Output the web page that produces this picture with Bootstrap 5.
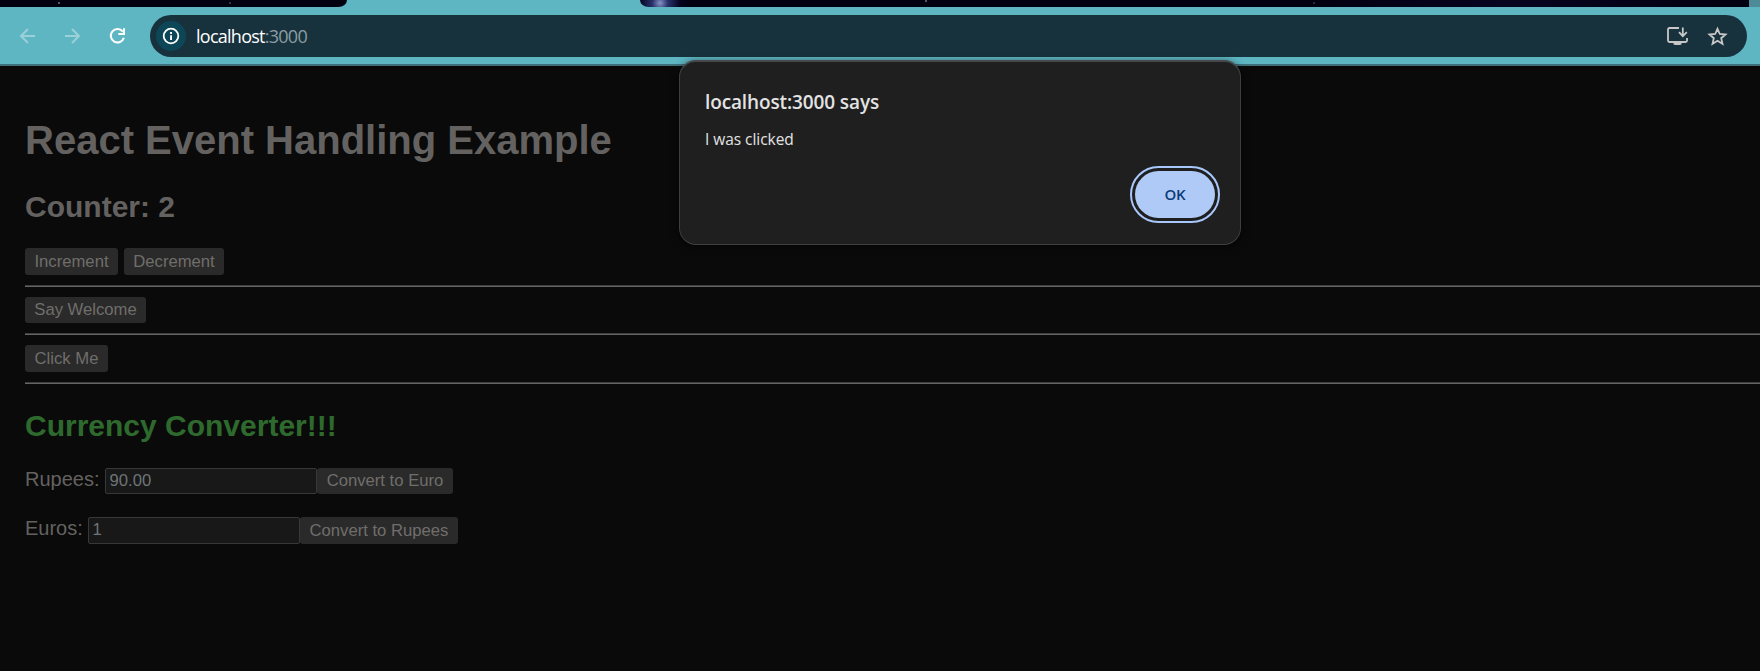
<!DOCTYPE html>
<html lang="en">
<head>
<meta charset="utf-8">
<title>React Event Handling Example</title>
<link href="https://cdn.jsdelivr.net/npm/bootstrap@5.3.0/dist/css/bootstrap.min.css" rel="stylesheet">
<style>
body{background:#0a0a0a;color:#646260;font:20px/23px "Liberation Sans",Arial,sans-serif;height:671px;overflow:hidden}
.tabstrip{height:7px;background:#5db6c2}
.tab-left{width:347px;background:#010110;border-bottom-right-radius:15px 12px}
.tab-right{width:1109px;margin-left:293px;border-bottom-left-radius:15px 12px;background:radial-gradient(circle at 20px 3px,#8794c4 0,#27306a 8px,#04041f 20px,transparent 30px),linear-gradient(90deg,#010110 0 60%,#070420 78%,#010110)}
.star{width:2px;height:2px;background:#55566c;margin-top:2px}
.toolbar{height:59px;background:#5db6c2;border-bottom:2px solid #3f7079;padding:8px 13px 7px 16px}
.omnibox{height:42px;border-radius:21px;background:#18323d;margin-left:21px;padding:0 18px 0 6px}
.info{width:30px;height:30px;background:#0d4657}
.url{font:18px/26px "Open Sans","Noto Sans",sans-serif;letter-spacing:-.74px;margin-left:10px;color:#fff}
.url span{color:#8c9da3}
.tool{width:24px;height:24px}
.example{padding:47px 0 0 25px}
h1{font-size:40px;line-height:46px;font-weight:700;margin:0 0 27px}
h2{font-size:30px;line-height:34px;font-weight:700;margin:0 0 24px}
.gray{background:#2a2a2a;color:#706e6b;border:0;border-radius:3px;font-size:16.67px;line-height:19px;height:27px;padding:0 0 1px;text-align:center;white-space:nowrap}
.rule{height:2px;border:0;opacity:1;margin:10px 0;background:linear-gradient(#3f3f3f 50%,#656565 50%)}
.green{color:#2e6a2d;margin:25px 0 25px}
.field{width:212px;height:26px;border:1px solid #383838;border-radius:2px;background:#181818;color:#6f7577;font-size:16.67px;line-height:19px;padding:0 3px 1px 3.5px;outline:0}
.alert-box{left:679px;top:60px;width:562px;height:185px;background:#1f1f1f;border:1px solid #3d3f42;border-top:2px solid #45494c;border-radius:17px;box-shadow:0 2px 8px #0009;font-family:"Open Sans","Noto Sans",sans-serif;padding:27px 25px 0 25px}
.alert-title{font-size:19px;line-height:26px;font-weight:600;color:#e3e3e3;letter-spacing:-.12px}
.alert-text{font-size:15.5px;line-height:20px;color:#e3e3e3;letter-spacing:-.05px;margin-top:14px}
.ok{width:80px;height:47px;border:0;border-radius:24px;background:#afcaf7;color:#0b3a78;font-size:15px;font-weight:600;letter-spacing:-.3px;outline:2px solid #a8c7fa;outline-offset:3px;margin-top:22px}
</style>
</head>
<body>
<div class="tabstrip d-flex">
  <div class="tab-left d-flex"><i class="star" style="margin-left:58px"></i><i class="star" style="margin-left:169px;opacity:.6"></i></div>
  <div class="tab-right d-flex"><i class="star" style="margin-left:285px;margin-top:0"></i><i class="star" style="margin-left:386px;opacity:.5"></i></div>
  <div class="flex-grow-1" style="background:#4d8b99"></div>
</div>
<nav class="toolbar d-flex align-items-center">
  <svg class="tool" viewBox="0 0 24 24" fill="none" stroke="#9bd0d8" stroke-width="2" style="margin-right:21px"><path d="M19 12H5.500M12 5l-7 7 7 7"/></svg>
  <svg class="tool" viewBox="0 0 24 24" fill="none" stroke="#9bd0d8" stroke-width="2" style="margin-right:20px"><path d="M4 12h14M11 5l7 7-7 7"/></svg>
  <svg class="tool" viewBox="0 0 24 24"><path fill="none" stroke="#fff" stroke-width="2.100" d="M17.800 7.600a6.700 6.700 0 1 0 1.100 6.100"/><path fill="#fff" d="M20 4.300v6.700h-6.700V9H18V4.300z"/></svg>
  <div class="omnibox flex-grow-1 d-flex align-items-center">
    <span class="info rounded-circle d-flex align-items-center justify-content-center"><svg width="18" height="18" viewBox="0 0 18 18"><circle cx="9" cy="9" r="7.300" fill="none" stroke="#fff" stroke-width="1.800"/><path fill="#fff" d="M8.100 5h1.900v1.900H8.100zM8.100 8.200h1.900V13H8.100z"/></svg></span>
    <div class="url me-auto">localhost<span>:3000</span></div>
    <svg width="24" height="24" viewBox="0 0 24 24" fill="none" stroke="#c7c7c7" stroke-width="1.800" style="margin-right:16px"><path d="M14 4H4.500Q3 4 3 5.500v11Q3 18 4.500 18h16q1.500 0 1.500-1.500V14"/><path d="M17.800 3.500v8M14 8.200l3.800 4 4-4"/><path fill="#c7c7c7" stroke="none" d="M8.500 18h8v2.500h-1V21h-6v-.5h-1z"/></svg>
    <svg width="24" height="24" viewBox="0 0 24 24" fill="none" stroke="#c7c7c7" stroke-width="1.800"><path d="M12.500 4.800l2.300 5.200 5.700.5-4.300 3.700 1.300 5.600-5-3-5 3 1.300-5.600-4.300-3.700 5.700-.5z"/></svg>
  </div>
</nav>
<main class="example">
  <h1 class="mt-1">React Event Handling Example</h1>
  <h2>Counter: 2</h2>
  <div class="d-flex"><button class="gray" style="width:93px;margin-right:6px">Increment</button><button class="gray" style="width:100px">Decrement</button></div>
  <hr class="rule">
  <div class="d-flex"><button class="gray" style="width:121px;height:26px">Say Welcome</button></div>
  <hr class="rule">
  <div class="d-flex"><button class="gray" style="width:83px">Click Me</button></div>
  <hr class="rule">
  <h2 class="green">Currency Converter!!!</h2>
  <div class="d-flex"><label style="width:80px">Rupees:</label><input class="field" value="90.00"><button class="gray" style="width:136px;height:26px">Convert to Euro</button></div>
  <div class="d-flex" style="margin-top:23px"><label style="width:63px">Euros:</label><input class="field" style="height:27px" value="1"><button class="gray" style="width:158px">Convert to Rupees</button></div>
</main>
<section class="alert-box position-absolute" role="alertdialog">
  <div class="alert-title">localhost:3000 says</div>
  <div class="alert-text">I was clicked</div>
  <div class="d-flex justify-content-end"><button class="ok">OK</button></div>
</section>
<script src="https://cdn.jsdelivr.net/npm/bootstrap@5.3.0/dist/js/bootstrap.bundle.min.js"></script>
</body>
</html>
